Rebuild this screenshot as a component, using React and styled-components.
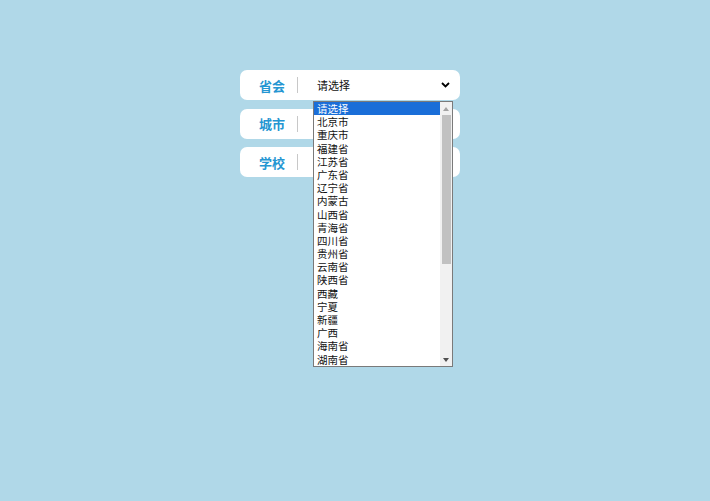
import React from "react";
import styled, { createGlobalStyle } from "styled-components";

const Global = createGlobalStyle`
  html, body {
    margin: 0;
    padding: 0;
    background-color: #b0d8e8;
    font-family: "Microsoft YaHei", "Noto Sans CJK SC", sans-serif;
  }
`;

const Page = styled.div`
  width: 710px;
  height: 501px;
  padding: 70px 0 0 240px;
  box-sizing: border-box;
  display: flex;
  flex-direction: column;
  gap: 8.5px;
`;

const Card = styled.div`
  position: relative;
  width: 220px;
  height: 30px;
  background-color: #fff;
  border-radius: 7px;
  display: flex;
  align-items: center;
`;

const Label = styled.div`
  width: 58px;
  height: 16px;
  border-right: 1px solid #c8c8c8;
  box-sizing: border-box;
  display: flex;
  align-items: center;
  justify-content: center;
  padding-left: 7px;
  color: #2596d2;
  font-size: 13px;
  font-weight: bold;
`;

const Select = styled.div`
  flex: 1;
  display: flex;
  align-items: center;
  justify-content: space-between;
  padding: 0 10px 0 19px;
  font-size: 11px;
  color: #111;
`;

const List = styled.div`
  position: absolute;
  left: 73px;
  top: 31px;
  width: 140px;
  height: 266px;
  box-sizing: border-box;
  border: 1px solid #7a7a7a;
  background-color: #fff;
  display: flex;
  z-index: 5;
`;

const Items = styled.div`
  flex: 1;
  display: flex;
  flex-direction: column;
`;

const Item = styled.div`
  height: 13.2px;
  line-height: 13.2px;
  padding-left: 3px;
  font-size: 10.5px;
  color: ${(p) => (p.$active ? "#fff" : "#111")};
  background-color: ${(p) => (p.$active ? "#1a6ed8" : "transparent")};
`;

const Scrollbar = styled.div`
  width: 12px;
  background-color: #f1f1f1;
  display: flex;
  flex-direction: column;
  align-items: center;
`;

const Arrow = styled.div`
  height: 13px;
  display: flex;
  align-items: center;
  justify-content: center;
`;

const Thumb = styled.div`
  width: 9px;
  height: 149px;
  background-color: #c1c1c1;
`;

const Spacer = styled.div`
  flex: 1;
`;

const provinces = [
  "请选择", "北京市", "重庆市", "福建省", "江苏省", "广东省", "辽宁省",
  "内蒙古", "山西省", "青海省", "四川省", "贵州省", "云南省", "陕西省",
  "西藏", "宁夏", "新疆", "广西", "海南省", "湖南省",
];

const Chevron = () => (
  <svg width="9" height="6" viewBox="0 0 9 6">
    <path d="M1 1l3.5 3.5L8 1" fill="none" stroke="#000" strokeWidth="1.8" />
  </svg>
);

const Tri = ({ up }) => (
  <svg width="6" height="4" viewBox="0 0 6 4">
    <path d={up ? "M0 4L3 0L6 4Z" : "M0 0L3 4L6 0Z"} fill={up ? "#a3a3a3" : "#505050"} />
  </svg>
);

const Row = ({ label, value, children }) => (
  <Card>
    <Label>{label}</Label>
    <Select>
      <span>{value}</span>
      {value && <Chevron />}
    </Select>
    {children}
  </Card>
);

export default function App() {
  return (
    <>
      <Global />
      <Page>
        <Row label="省会" value="请选择">
          <List>
            <Items>
              {provinces.map((p, i) => (
                <Item key={p} $active={i === 0}>{p}</Item>
              ))}
            </Items>
            <Scrollbar>
              <Arrow><Tri up /></Arrow>
              <Thumb />
              <Spacer />
              <Arrow><Tri /></Arrow>
            </Scrollbar>
          </List>
        </Row>
        <Row label="城市" />
        <Row label="学校" />
      </Page>
    </>
  );
}
